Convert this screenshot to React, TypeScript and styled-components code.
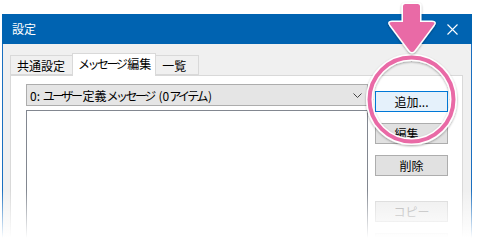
import styled, { createGlobalStyle } from 'styled-components';

const GlobalStyle = createGlobalStyle`
  html, body {
    margin: 0;
    padding: 0;
    background: #ffffff;
  }
  body {
    font-family: "Noto Sans CJK JP", "Noto Sans", sans-serif;
  }
`;

const buttons: { label: string; kind: 'default' | 'normal' | 'disabled'; push?: boolean }[] = [
  { label: '追加...', kind: 'default' },
  { label: '編集...', kind: 'normal' },
  { label: '削除', kind: 'normal' },
  { label: 'コピー', kind: 'disabled', push: true },
  { label: '', kind: 'disabled' },
];

const Annotation = () => (
  <Overlay width="480" height="250" viewBox="0 0 480 250">
    <defs>
      <filter id="shadow" x="-30%" y="-30%" width="160%" height="160%">
        <feDropShadow dx="0" dy="1" stdDeviation="1.2" floodColor="#000" floodOpacity="0.35" />
      </filter>
    </defs>
    <circle cx="411.5" cy="99.5" r="42" fill="none" stroke="#ffffff" strokeWidth="7" filter="url(#shadow)" />
    <circle cx="411.5" cy="99.5" r="42" fill="none" stroke="#e96aa6" strokeWidth="4" />
    <path
      d="M403 6.5 Q403 4 405.5 4 L417.5 4 Q420 4 420 6.5 L420 22 L432 22 Q436 22 433.5 25 L414.5 50.5 Q412 53.5 409.5 50.5 L390.5 25 Q388 22 392 22 L403 22 Z"
      fill="#e96aa6"
      stroke="#ffffff"
      strokeWidth="3"
      strokeLinejoin="round"
      paintOrder="stroke"
      filter="url(#shadow)"
    />
  </Overlay>
);

const App = () => {
  return (
    <Page>
      <GlobalStyle />
      <Window>
        <TitleBar>
          <Title>設定</Title>
          <CloseIcon width="11" height="11" viewBox="0 0 11 11">
            <path d="M0.5 0.5 L10.5 10.5 M10.5 0.5 L0.5 10.5" stroke="#ffffff" strokeWidth="1.1" />
          </CloseIcon>
        </TitleBar>
        <Body>
          <TabStrip>
            <Tab>共通設定</Tab>
            <Tab $active>
              <Kana>メッセージ</Kana>編集
            </Tab>
            <Tab>一覧</Tab>
          </TabStrip>
          <Panel>
            <ListColumn>
              <Select>
                <SelectText>
                  0: <Kana>ユーザー</Kana>定義<Kana>メッセージ</Kana> (0<Kana>アイテム</Kana>)
                </SelectText>
                <svg width="9" height="5" viewBox="0 0 9 5">
                  <path d="M0.5 0.5 L4.5 4.5 L8.5 0.5" fill="none" stroke="#444" strokeWidth="1" />
                </svg>
              </Select>
              <ListBox />
            </ListColumn>
            <ButtonColumn>
              {buttons.map((b, i) => (
                <Button key={i} $kind={b.kind} $push={b.push}>
                  {b.label}
                </Button>
              ))}
            </ButtonColumn>
          </Panel>
        </Body>
      </Window>
      <Fade />
      <Annotation />
    </Page>
  );
};

const Page = styled.div`
  position: relative;
  width: 480px;
  height: 250px;
  overflow: hidden;
  background: #ffffff;
`;

const Window = styled.div`
  margin: 14px 0 0 2px;
  width: 470px;
  height: 236px;
  display: flex;
  flex-direction: column;
`;

const TitleBar = styled.div`
  height: 30px;
  flex-shrink: 0;
  background: #0063b1;
  display: flex;
  align-items: center;
  justify-content: space-between;
  padding: 0 10px 0 10px;
`;

const Title = styled.span`
  color: #ffffff;
  font-size: 12px;
  line-height: 1;
`;

const CloseIcon = styled.svg`
  margin-right: 4px;
`;

const Body = styled.div`
  flex: 1;
  background: #f0f0f0;
  border-left: 1px solid #1a6fc0;
  border-right: 1px solid #1a6fc0;
  padding: 9px 8px 0 7px;
  display: flex;
  flex-direction: column;
`;

const TabStrip = styled.div`
  display: flex;
  align-items: flex-end;
  height: 22px;
  position: relative;
  z-index: 1;
`;

const Tab = styled.div<{ $active?: boolean }>`
  height: ${(p) => (p.$active ? '23px' : '20px')};
  min-width: 44px;
  box-sizing: border-box;
  padding: ${(p) => (p.$active ? '0 4px 3px 5px' : '0 7px 0 6px')};
  margin-bottom: ${(p) => (p.$active ? '-1px' : '0')};
  background: ${(p) => (p.$active ? '#ffffff' : '#f0f0f0')};
  border: 1px solid #d9d9d9;
  border-bottom: ${(p) => (p.$active ? 'none' : '1px solid #d9d9d9')};
  margin-left: -1px;
  &:first-child {
    margin-left: 0;
  }
  display: flex;
  align-items: center;
  font-size: 12px;
  color: #000000;
  white-space: nowrap;
`;

const Panel = styled.div`
  flex: 1;
  background: #ffffff;
  border: 1px solid #d9d9d9;
  border-bottom: none;
  padding: 8px 0 0 15px;
  display: flex;
  align-items: flex-start;
`;

const ListColumn = styled.div`
  width: 342px;
  display: flex;
  flex-direction: column;
  gap: 4px;
  align-self: stretch;
`;

const Select = styled.div`
  height: 22px;
  box-sizing: border-box;
  background: #e5e5e5;
  border: 1px solid #adadad;
  display: flex;
  align-items: center;
  justify-content: space-between;
  padding: 0 5px 0 3px;
`;

const SelectText = styled.span`
  font-size: 12px;
  color: #000000;
  white-space: nowrap;
`;

const Kana = styled.span`
  letter-spacing: -2.5px;
  margin-right: 2px;
`;

const ListBox = styled.div`
  flex: 1;
  background: #ffffff;
  border: 1px solid #828790;
  border-bottom: none;
`;

const ButtonColumn = styled.div`
  margin: 7px 0 0 7px;
  display: flex;
  flex-direction: column;
  gap: 11px;
`;

const Button = styled.div<{ $kind: 'default' | 'normal' | 'disabled'; $push?: boolean }>`
  width: 73px;
  height: 21px;
  box-sizing: border-box;
  display: flex;
  align-items: center;
  justify-content: center;
  font-size: 12px;
  margin-top: ${(p) => (p.$push ? '14px' : '0')};
  color: ${(p) => (p.$kind === 'disabled' ? '#a3a3a3' : '#000000')};
  background: ${(p) =>
    p.$kind === 'default' ? '#e5f1fb' : p.$kind === 'disabled' ? '#ededed' : '#e1e1e1'};
  border: 1px solid
    ${(p) => (p.$kind === 'default' ? '#0078d7' : p.$kind === 'disabled' ? '#d5d5d5' : '#adadad')};
`;

const Fade = styled.div`
  position: absolute;
  left: 0;
  right: 0;
  top: 190px;
  bottom: 0;
  background: linear-gradient(to bottom, rgba(255, 255, 255, 0) 0%, #ffffff 80%);
  pointer-events: none;
`;

const Overlay = styled.svg`
  position: absolute;
  left: 0;
  top: 0;
  pointer-events: none;
`;

export default App;
